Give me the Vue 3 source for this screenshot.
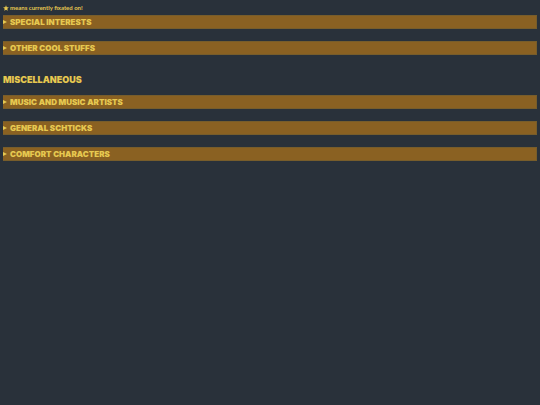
<template>
  <main class="page">
    <p class="note">
      <svg class="star" viewBox="0 0 24 24" fill="currentColor" aria-hidden="true">
        <path d="M12 1l3.200 7.600 8.300.7-6.300 5.400 1.900 8.100L12 18.500l-7.100 4.300 1.900-8.100L.5 9.300l8.300-.7z"/>
      </svg>
      <span>means currently fixated on!</span>
    </p>
    <div class="group">
      <details v-for="title in interests" :key="title">
        <summary>
          <svg class="marker" viewBox="0 0 4 4" fill="currentColor" aria-hidden="true"><path d="M0 0l4 2-4 2z"/></svg>
          {{ title }}
        </summary>
      </details>
    </div>
    <h2>MISCELLANEOUS</h2>
    <div class="group">
      <details v-for="title in misc" :key="title">
        <summary>
          <svg class="marker" viewBox="0 0 4 4" fill="currentColor" aria-hidden="true"><path d="M0 0l4 2-4 2z"/></svg>
          {{ title }}
        </summary>
      </details>
    </div>
  </main>
</template>

<script setup>
const interests = ['SPECIAL INTERESTS', 'OTHER COOL STUFFS']
const misc = ['MUSIC AND MUSIC ARTISTS', 'GENERAL SCHTICKS', 'COMFORT CHARACTERS']
</script>

<style>
body { background: #29313a; }
</style>

<style scoped>
.page { padding: 3px; color: #e6c850; font-family: Inter, "Liberation Sans", sans-serif; }
.note {
  margin: 0 0 3px; display: flex; align-items: center; gap: 1px;
  font-family: Lato, sans-serif; font-size: 6px; font-weight: 700; line-height: 9px;
}
.star { width: 6px; height: 6px; }
.group { display: flex; flex-direction: column; gap: 12px; }
summary {
  display: flex; align-items: center; gap: 3px; list-style: none; cursor: pointer;
  border: 1px solid #775d2b; border-left: 0; background: #8a6122;
  font-size: 8px; font-weight: 900; line-height: 12px;
}
summary::-webkit-details-marker { display: none; }
.marker { width: 4px; height: 4px; }
h2 { margin: 19px 0 9px; font-size: 9px; font-weight: 900; line-height: 12px; }
</style>
